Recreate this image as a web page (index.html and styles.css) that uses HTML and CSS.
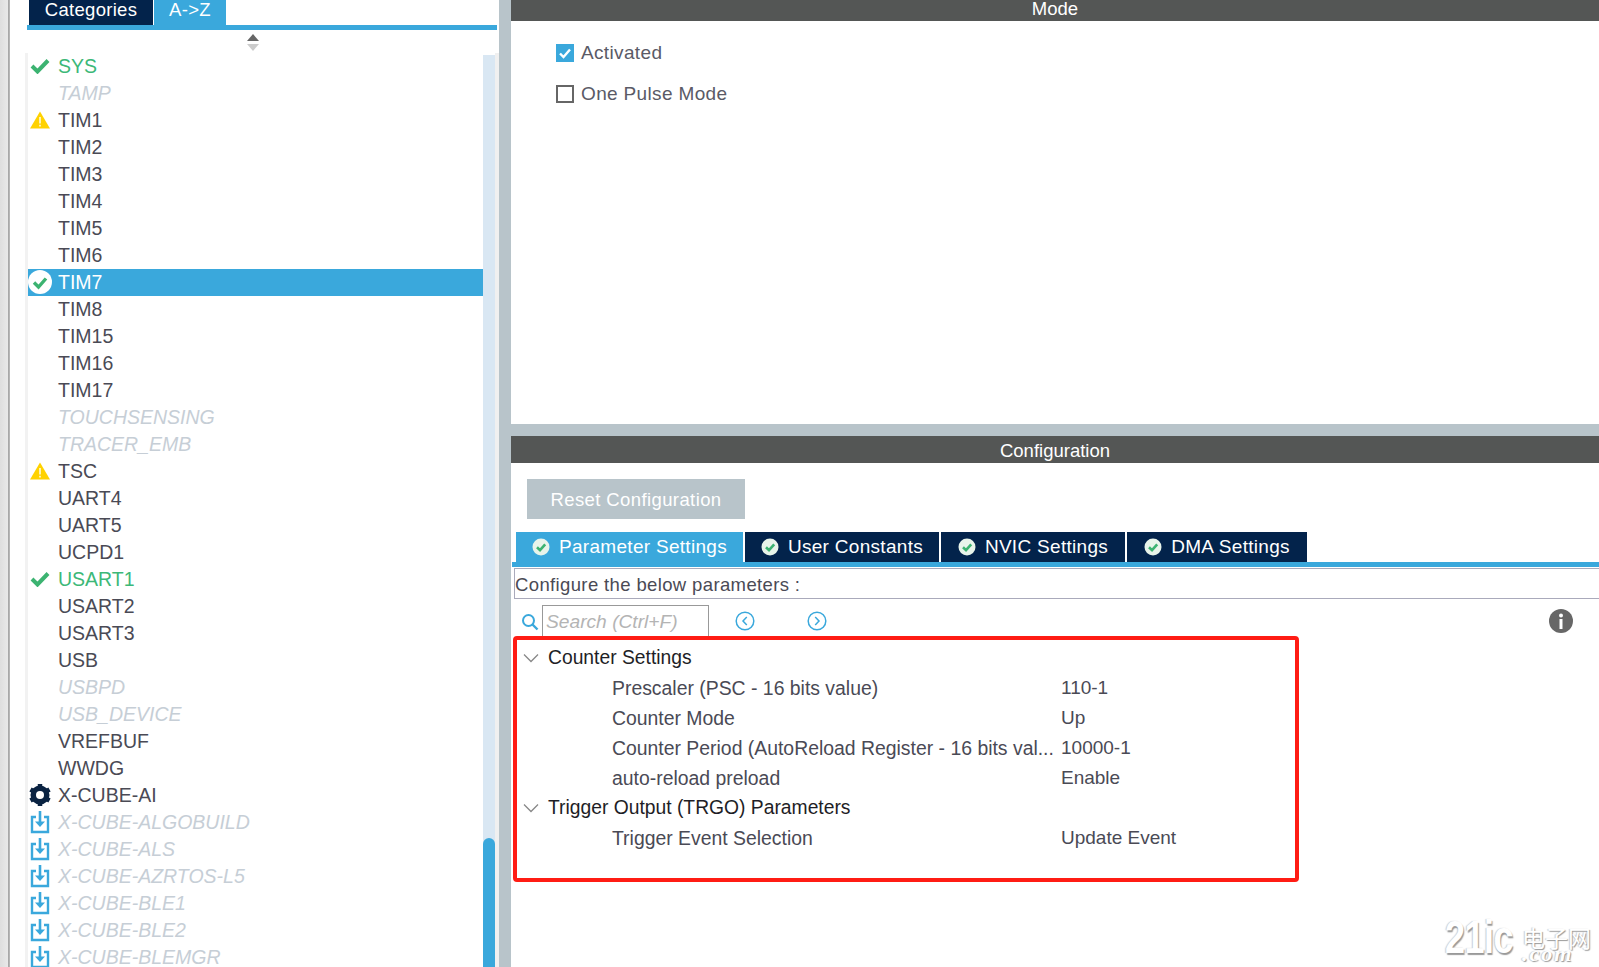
FILE: index.html
```html
<!DOCTYPE html>
<html lang="en">
<head>
<meta charset="utf-8">
<title>Timers</title>
<link rel="stylesheet" href="styles.css">
</head>
<body>
<svg class="defs" width="0" height="0" aria-hidden="true">
  <symbol id="dl" viewBox="0 0 20 24">
    <path d="M6 7H2v15h16V7h-4" fill="none" stroke="#3aa8dc" stroke-width="2.4"/>
    <path d="M10 1v12" stroke="#3aa8dc" stroke-width="2.6"/>
    <path d="M5 11.5h10L10 17z" fill="#3aa8dc"/>
  </symbol>
  <symbol id="warn" viewBox="0 0 20 18">
    <path d="M10 .5 20 17.5H0z" fill="#ffd200"/>
    <path d="M10 6v6.500M10 13.800v1.800" stroke="#fff" stroke-width="1.400"/>
  </symbol>
  <symbol id="ok" viewBox="0 0 18 18">
    <circle cx="9" cy="9" r="8.500" fill="#e8f4ea"/>
    <path d="M5 9.300 8 12.200 13.200 6.300" fill="none" stroke="#3cb371" stroke-width="2.600"/>
  </symbol>
</svg>
<div class="app">
  <aside class="side">
    <div class="edge"></div>
    <div class="panel">
      <div class="side-tabs">
        <span class="side-tab dark">Categories</span>
        <span class="side-tab blue">A-&gt;Z</span>
      </div>
      <div class="sorter">
        <svg width="14" height="17" viewBox="0 0 14 17"><path d="M7 0 13 7H1z" fill="#666"/><path d="M1 10H13L7 17z" fill="#ccc"/></svg>
      </div>
      <div class="list-wrap">
        <ul class="list">
          <li class="row green"><span class="ico"><svg width="20" height="16" viewBox="0 0 20 16"><path d="M2 8 7.500 13.500 18 2.500" fill="none" stroke="#3cb371" stroke-width="4"/></svg></span>SYS</li>
          <li class="row off"><span class="ico"></span>TAMP</li>
          <li class="row"><span class="ico"><svg width="20" height="18"><use href="#warn"/></svg></span>TIM1</li>
          <li class="row"><span class="ico"></span>TIM2</li>
          <li class="row"><span class="ico"></span>TIM3</li>
          <li class="row"><span class="ico"></span>TIM4</li>
          <li class="row"><span class="ico"></span>TIM5</li>
          <li class="row"><span class="ico"></span>TIM6</li>
          <li class="row sel"><span class="ico"><svg width="24" height="24" viewBox="0 0 24 24"><circle cx="12" cy="12" r="12" fill="#fff"/><path d="M6 12.500 10.500 17 18 8.500" fill="none" stroke="#3cb371" stroke-width="3.400"/></svg></span>TIM7</li>
          <li class="row"><span class="ico"></span>TIM8</li>
          <li class="row"><span class="ico"></span>TIM15</li>
          <li class="row"><span class="ico"></span>TIM16</li>
          <li class="row"><span class="ico"></span>TIM17</li>
          <li class="row off"><span class="ico"></span>TOUCHSENSING</li>
          <li class="row off"><span class="ico"></span>TRACER_EMB</li>
          <li class="row"><span class="ico"><svg width="20" height="18"><use href="#warn"/></svg></span>TSC</li>
          <li class="row"><span class="ico"></span>UART4</li>
          <li class="row"><span class="ico"></span>UART5</li>
          <li class="row"><span class="ico"></span>UCPD1</li>
          <li class="row green"><span class="ico"><svg width="20" height="16" viewBox="0 0 20 16"><path d="M2 8 7.500 13.500 18 2.500" fill="none" stroke="#3cb371" stroke-width="4"/></svg></span>USART1</li>
          <li class="row"><span class="ico"></span>USART2</li>
          <li class="row"><span class="ico"></span>USART3</li>
          <li class="row"><span class="ico"></span>USB</li>
          <li class="row off"><span class="ico"></span>USBPD</li>
          <li class="row off"><span class="ico"></span>USB_DEVICE</li>
          <li class="row"><span class="ico"></span>VREFBUF</li>
          <li class="row"><span class="ico"></span>WWDG</li>
          <li class="row"><span class="ico"><svg width="24" height="24" viewBox="0 0 24 24"><circle cx="12" cy="12" r="6.500" fill="none" stroke="#0a2342" stroke-width="6"/><path d="M12 1v22M2.500 6.500l19 11M2.500 17.500l19-11" stroke="#0a2342" stroke-width="4.500"/><circle cx="12" cy="12" r="4" fill="#fff"/></svg></span>X-CUBE-AI</li>
          <li class="row off"><span class="ico"><svg width="20" height="24"><use href="#dl"/></svg></span>X-CUBE-ALGOBUILD</li>
          <li class="row off"><span class="ico"><svg width="20" height="24"><use href="#dl"/></svg></span>X-CUBE-ALS</li>
          <li class="row off"><span class="ico"><svg width="20" height="24"><use href="#dl"/></svg></span>X-CUBE-AZRTOS-L5</li>
          <li class="row off"><span class="ico"><svg width="20" height="24"><use href="#dl"/></svg></span>X-CUBE-BLE1</li>
          <li class="row off"><span class="ico"><svg width="20" height="24"><use href="#dl"/></svg></span>X-CUBE-BLE2</li>
          <li class="row off"><span class="ico"><svg width="20" height="24"><use href="#dl"/></svg></span>X-CUBE-BLEMGR</li>
        </ul>
        <div class="track"><div class="thumb"></div></div>
      </div>
    </div>
  </aside>
  <main class="main">
    <section class="mode">
      <h2 class="bar bar-mode">Mode</h2>
      <label class="check"><span class="box on"><svg width="18" height="18" viewBox="0 0 18 18"><path d="M4 9.500 7.500 13 14 5.500" fill="none" stroke="#fff" stroke-width="2.400"/></svg></span>Activated</label>
      <label class="check"><span class="box"></span>One Pulse Mode</label>
    </section>
    <section class="config">
      <h2 class="bar bar-config">Configuration</h2>
      <div class="reset">Reset Configuration</div>
      <div class="tabs">
        <span class="tab active t1"><svg width="18" height="18"><use href="#ok"/></svg>Parameter Settings</span>
        <span class="tab t2"><svg width="18" height="18"><use href="#ok"/></svg>User Constants</span>
        <span class="tab t3"><svg width="18" height="18"><use href="#ok"/></svg>NVIC Settings</span>
        <span class="tab t4"><svg width="18" height="18"><use href="#ok"/></svg>DMA Settings</span>
      </div>
      <div class="hint">Configure the below parameters :</div>
      <div class="search-row">
        <svg class="s-ico" width="18" height="18" viewBox="0 0 18 18"><circle cx="7.500" cy="7.500" r="5.500" fill="none" stroke="#3aa8dc" stroke-width="2"/><path d="M11.500 11.500 16.500 16.500" stroke="#3aa8dc" stroke-width="2.400"/></svg>
        <span class="search">Search (Ctrl+F)</span>
        <svg class="nav nav1" width="20" height="20" viewBox="0 0 20 20"><circle cx="10" cy="10" r="8.800" fill="none" stroke="#3aa8dc" stroke-width="1.500"/><path d="M11.800 6 8 10l3.800 4" fill="none" stroke="#3aa8dc" stroke-width="1.500"/></svg>
        <svg class="nav nav2" width="20" height="20" viewBox="0 0 20 20"><circle cx="10" cy="10" r="8.800" fill="none" stroke="#3aa8dc" stroke-width="1.500"/><path d="M8.200 6 12 10l-3.800 4" fill="none" stroke="#3aa8dc" stroke-width="1.500"/></svg>
        <svg class="info" width="24" height="24" viewBox="0 0 24 24"><circle cx="12" cy="12" r="12" fill="#676767"/><circle cx="12" cy="6.500" r="2" fill="#fff"/><path d="M12 10v10" stroke="#fff" stroke-width="3"/></svg>
      </div>
      <div class="tree">
        <div class="group"><svg class="chev" width="16" height="10" viewBox="0 0 16 10"><path d="M1 1.500 8 8.500 15 1.500" fill="none" stroke="#888" stroke-width="1.300"/></svg>Counter Settings</div>
        <div class="param"><span class="p-name">Prescaler (PSC - 16 bits value)</span><span>110-1</span></div>
        <div class="param"><span class="p-name">Counter Mode</span><span>Up</span></div>
        <div class="param"><span class="p-name">Counter Period (AutoReload Register - 16 bits val...</span><span>10000-1</span></div>
        <div class="param"><span class="p-name">auto-reload preload</span><span>Enable</span></div>
        <div class="group"><svg class="chev" width="16" height="10" viewBox="0 0 16 10"><path d="M1 1.500 8 8.500 15 1.500" fill="none" stroke="#888" stroke-width="1.300"/></svg>Trigger Output (TRGO) Parameters</div>
        <div class="param"><span class="p-name">Trigger Event Selection</span><span>Update Event</span></div>
      </div>
    </section>
    <div class="mark"><span class="mark-a">21ic</span><span class="mark-b"><span class="mark-cn">电子网</span><span class="mark-com">.com</span></span></div>
  </main>
</div>
</body>
</html>
```
FILE: styles.css
```css
* { box-sizing: border-box; }
html, body { margin: 0; height: 100%; overflow: hidden; background: #fff; }
body { font-family: "Liberation Sans", Arial, sans-serif; color: #46464f; }
.defs { position: absolute; }
.app { display: flex; height: 967px; width: 1599px; }

/* sidebar */
.side { width: 511px; flex: none; display: flex; background: #fff; border-right: 12px solid #b8c4ca; }
.edge { width: 10px; flex: none; background: linear-gradient(90deg, #dedede 0, #e8e8e8 75%, #a8a8a8 85%, #bdbdbd 100%); }
.panel { flex: 1; min-width: 0; padding-left: 15px; display: flex; flex-direction: column; }
.side-tabs { height: 30px; flex: none; display: flex; gap: 1px; margin: 0 2px 0 2px; padding-left: 2px; border-bottom: 5px solid #3aa8dc; }
.side-tab { height: 25px; display: flex; align-items: center; justify-content: center; padding-bottom: 5px; font-size: 18.500px; color: #fff; letter-spacing: .3px; }
.side-tab.dark { width: 124px; background: #03234b; }
.side-tab.blue { width: 72px; background: #3aa8dc; }
.sorter { height: 22.500px; flex: none; display: flex; justify-content: center; align-items: flex-start; padding-top: 4px; padding-right: 18px; }
.list-wrap { flex: 1; min-height: 0; display: flex; background: #fff; border-left: 3px solid #f2f2f2; border-right: 4px solid #f0f0f0; }
.list { flex: 1; min-width: 0; margin: 0; padding: 0; list-style: none; }
.row { height: 27px; display: flex; align-items: center; font-size: 19.500px; color: #4a4a55; white-space: nowrap; }
.ico { width: 30px; height: 27px; flex: none; display: flex; align-items: center; justify-content: center; padding-right: 6px; }
.ico svg { flex: none; }
.row.green { color: #3cb878; }
.row.off { color: #c6ced6; font-style: italic; }
.row.sel { background: #3aa8dc; color: #fff; }
.track { width: 12px; flex: none; margin-top: 2.500px; background: #d9e7f3; display: flex; flex-direction: column; justify-content: flex-end; }
.thumb { height: 129px; background: #3aa8dc; border-radius: 6px 6px 0 0; }

/* main */
.main { flex: 1; min-width: 0; display: flex; flex-direction: column; position: relative; }
.bar { margin: 0; background: #545655; color: #fff; font-weight: 400; font-size: 18.500px; text-align: center; display: flex; align-items: center; justify-content: center; }
.mode { height: 424px; flex: none; }
.bar-mode { height: 21px; padding-bottom: 3px; }
.check { display: flex; align-items: center; gap: 7px; height: 20px; margin: 0 0 0 45px; font-size: 19px; color: #5a5a66; letter-spacing: .35px; }
.bar-mode + .check { margin-top: 22px; margin-bottom: 21px; }
.box { width: 18px; height: 18px; flex: none; border: 2px solid #666; display: block; }
.box.on { background: #3aa8dc; border: 0; }
.config { flex: 1; min-height: 0; border-top: 12px solid #b8c4ca; display: flex; flex-direction: column; }
.bar-config { height: 27px; padding-top: 2px; }
.reset { width: 218px; height: 40px; margin: 16px 0 0 16px; padding-top: 2px; background: #b8c4ca; color: #fff; font-size: 18.500px; letter-spacing: .4px; display: flex; align-items: center; justify-content: center; }
.tabs { display: flex; gap: 2px; height: 35px; margin: 13px 0 0 1px; padding-left: 4px; border-bottom: 5px solid #3aa8dc; flex: none; }
.tab { height: 30px; display: flex; align-items: center; justify-content: center; gap: 9px; background: #03234b; color: #fff; font-size: 19px; letter-spacing: .3px; white-space: nowrap; }
.tab.active { background: #3aa8dc; }
.t1 { width: 227px; }
.t2 { width: 194px; }
.t3 { width: 184px; }
.t4 { width: 180px; }
.hint { height: 31px; margin: 1px 0 0 3px; padding-top: 2px; border: 1px solid #aab; border-right: 0; display: flex; align-items: center; font-size: 18.500px; color: #4a4a55; letter-spacing: .37px; white-space: nowrap; }
.search-row { height: 31px; margin-top: 6px; padding-left: 10px; display: flex; align-items: center; flex: none; }
.s-ico { flex: none; margin-top: 2px; }
.search { width: 167px; height: 31px; margin-left: 3px; padding: 2px 0 0 3px; border: 1px solid #999; border-bottom: 0; font-size: 19.200px; font-style: italic; color: #b4b4b4; display: flex; align-items: center; flex: none; }
.nav { flex: none; }
.nav1 { margin-left: 26px; }
.nav2 { margin-left: 52px; }
.info { margin-left: auto; margin-right: 26px; flex: none; }
.tree { width: 786px; height: 246px; margin: 0 0 0 2px; padding: 3px 0 0 0; border: 4px solid #ff1c14; border-radius: 4px; }
.group { height: 30px; display: flex; align-items: center; font-size: 19.300px; color: #1e1e26; white-space: nowrap; }
.chev { margin: 0 9px 0 6px; flex: none; }
.param { height: 30px; display: flex; align-items: center; padding-left: 95px; font-size: 19px; color: #4a4a55; white-space: nowrap; }
.p-name { width: 449px; flex: none; font-size: 19.400px; }

/* watermark */
.mark { position: absolute; right: 8px; bottom: 6px; display: flex; align-items: flex-end; gap: 9px; color: #fff; text-shadow: 1px 1px 1px #999, -1px 0 1px #ccc; }
.mark-a { font-size: 36px; line-height: 36px; font-weight: 700; letter-spacing: -.5px; transform: scaleY(1.3); transform-origin: center bottom; }
.mark-b { display: flex; flex-direction: column; line-height: 1; }
.mark-cn { font-family: "Noto Sans CJK SC", sans-serif; font-size: 23px; line-height: 20px; }
.mark-com { font-family: "Liberation Serif", serif; font-style: italic; font-weight: 700; font-size: 22px; line-height: 14px; letter-spacing: 2px; }
```
